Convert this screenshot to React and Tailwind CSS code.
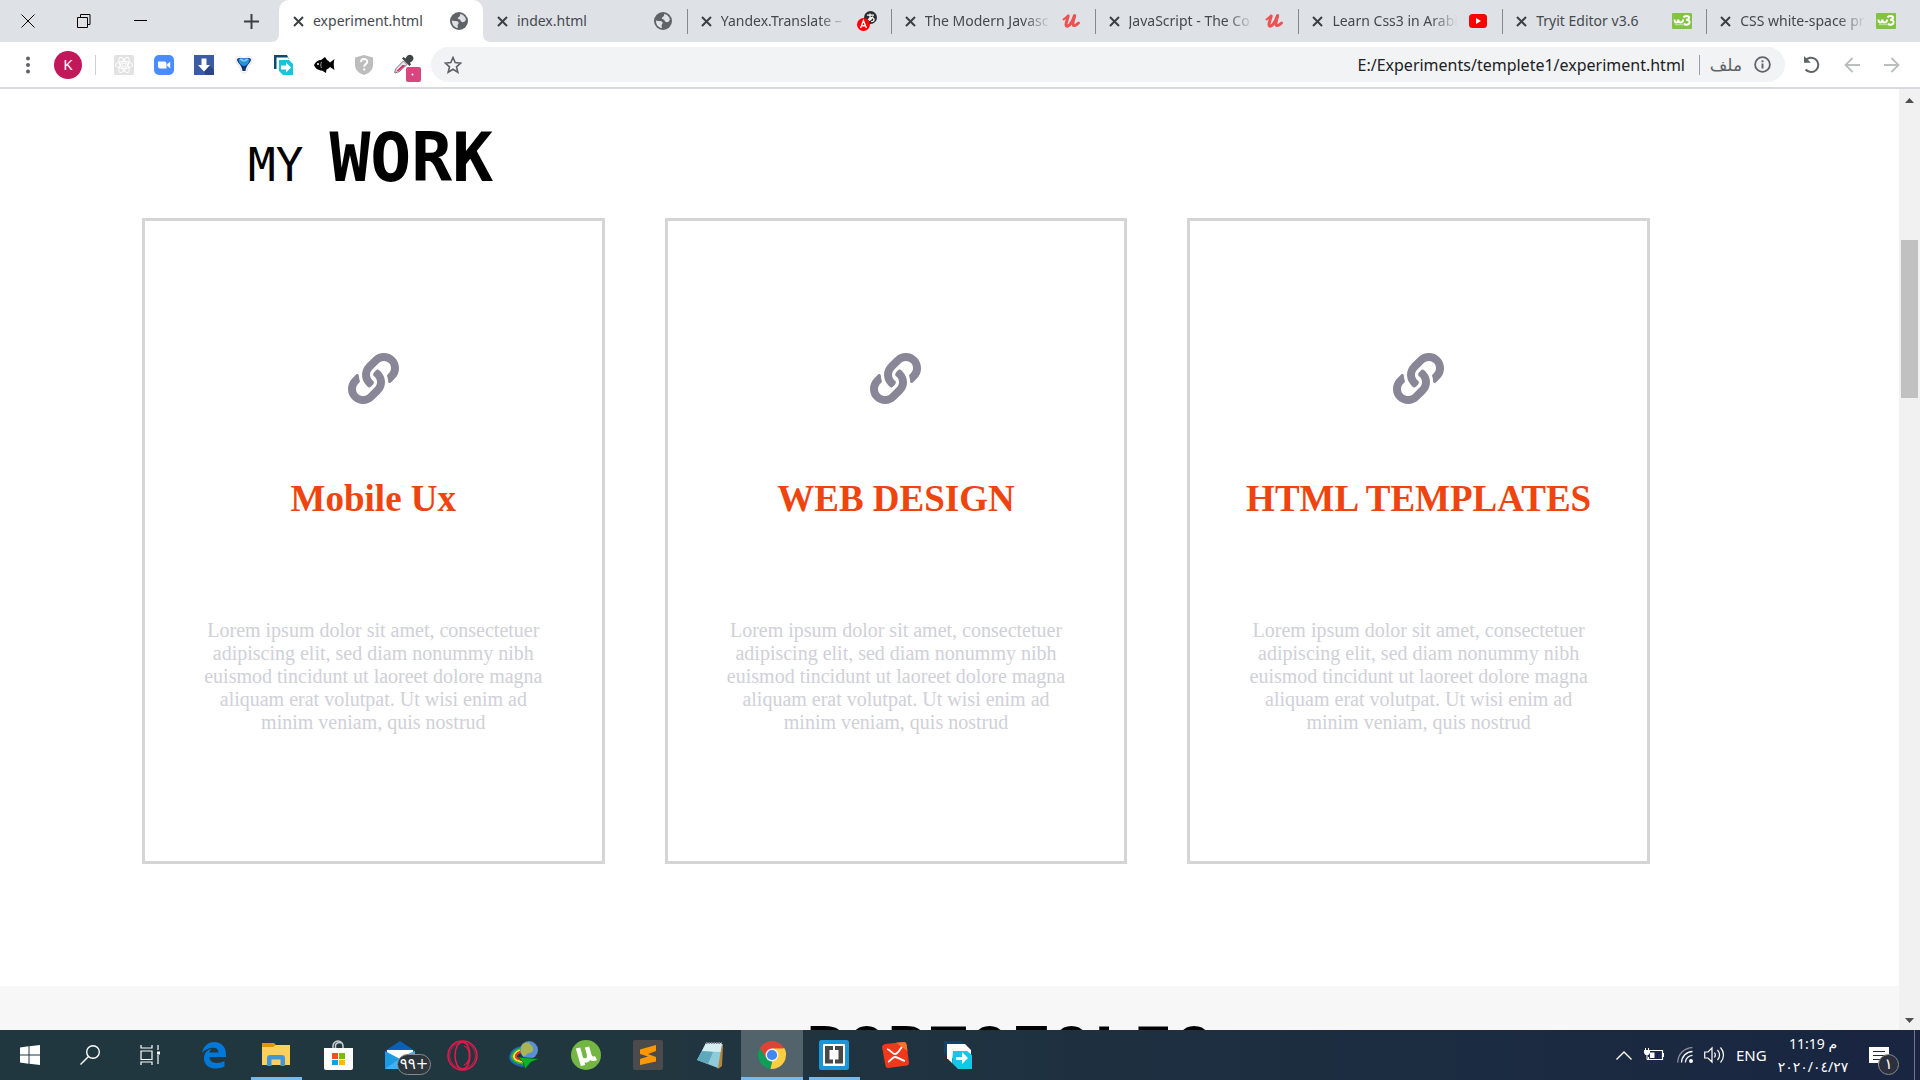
import React from "react";
import { FaLink } from "react-icons/fa";

const UI = "font-['Noto_Sans','DejaVu_Sans',sans-serif]";

/* ---------- tab icons ---------- */
const Globe = () => (
  <svg width="18" height="18" viewBox="0 0 18 18">
    <circle cx="9" cy="9" r="9" fill="#5f6368" />
    <path
      d="M2 8.5 C4 9.5 7 8 8.3 10 C9.4 11.6 7.4 12.2 7.6 14 C7.7 15 8.3 15.6 7.6 16 C4 15.3 1.8 12.3 2 8.5Z M10 2 C13 2.3 15.2 4.4 15.9 7.2 C15.4 9.6 13.3 10.9 11.4 9.8 C10.2 9 10.8 7.6 9.2 7.3 C7.6 7 7.4 6.2 8.4 5.3 C9.2 4.6 10.6 4.2 10 2Z"
      fill="#dee1e6"
    />
  </svg>
);
const Yandex = () => (
  <svg width="20" height="20" viewBox="0 0 20 20">
    <circle cx="13.5" cy="6.5" r="6.5" fill="#2d2d2d" />
    <path d="M10 4.200h7 M13 2.500v7.500 M11 9c1.500-3 6-3 6-.5 0 1.500-1.200 2.200-2.800 2.200 M15.800 5.500c-.8 2-2.300 3.500-4 4" stroke="#fff" strokeWidth="1.200" fill="none" />
    <circle cx="6.500" cy="13.500" r="6.500" fill="#f00" />
    <path d="M3.600 17 6.500 9.700 9.400 17 M4.700 14.800h3.600" stroke="#fff" strokeWidth="1.400" fill="none" />
  </svg>
);
const Udemy = () => (
  <svg width="18" height="14" viewBox="0 0 18 14" fill="none" stroke="#ec5252" strokeLinecap="round" strokeLinejoin="round">
    <path d="M1.500 5.500C3 4.500 4.500 3 6 1.800" strokeWidth="2" />
    <path d="M6.200 2C5.600 5 4 8 4 10.500 4 13 6.200 12.500 8 10.500 9.800 8.500 11.500 5 12.500 1.800" strokeWidth="3" />
    <path d="M12.800 1.800C12 4.500 10.800 8 11 10.500 11.300 12.500 13.500 12 16.500 9" strokeWidth="2.800" />
  </svg>
);
const Youtube = () => (
  <svg width="18" height="14" viewBox="0 0 18 14">
    <rect width="18" height="14" rx="3.500" fill="#f00" />
    <path d="M7 4l5 3-5 3z" fill="#fff" />
  </svg>
);
const W3 = () => (
  <svg width="20" height="16" viewBox="0 0 20 16">
    <rect width="20" height="16" rx="1" fill="#82c341" />
    <path d="M2.500 6.500c0 4 3.500 4 3.700 0 .2 4 4.500 4 5 0M11.500 4.500c1-2 5.500-2 5.500.3 0 1.700-2 2-3 2 2 0 4 .7 3.500 3-.5 2.500-4.500 2.700-5.500.7" fill="none" stroke="#fff" strokeWidth="2" />
    <path d="M3 11.500h8" stroke="#b8dd94" strokeWidth="1.500" />
  </svg>
);

const tabs = [
  { title: "experiment.html", Icon: Globe, active: true },
  { title: "index.html", Icon: Globe },
  { title: "Yandex.Translate –", Icon: Yandex, fade: true, sep: true },
  { title: "The Modern Javasc", Icon: Udemy, fade: true, sep: true },
  { title: "JavaScript - The Co", Icon: Udemy, fade: true, sep: true },
  { title: "Learn Css3 in Arabi", Icon: Youtube, fade: true, sep: true },
  { title: "Tryit Editor v3.6", Icon: W3, sep: true },
  { title: "CSS white-space pr", Icon: W3, fade: true, sep: true },
];

function Tab({ title, Icon, active, fade, sep }) {
  return (
    <div className={"relative flex h-full min-w-0 flex-1 items-center pl-3.5 pr-3 " + (active ? "rounded-t-[10px] bg-white" : "")}>
      {sep && <span className="absolute left-0 top-[9px] h-[25px] w-px bg-[#85888d]" />}
      {active && (
        <>
          <svg className="absolute -left-2 bottom-0" width="8" height="8" viewBox="0 0 8 8"><path d="M8 0v8H0c5 0 8-3 8-8z" fill="#fff" /></svg>
          <svg className="absolute -right-2 bottom-0" width="8" height="8" viewBox="0 0 8 8"><path d="M0 0v8h8C3 8 0 5 0 0z" fill="#fff" /></svg>
        </>
      )}
      <button aria-label={"Close " + title} className="flex w-5 shrink-0 items-center">
        <svg width="11" height="11" viewBox="0 0 11 11"><path d="M1 1l9 9M10 1l-9 9" stroke="#3c4043" strokeWidth="2" /></svg>
      </button>
      <span
        className={
          "min-w-0 flex-1 overflow-hidden whitespace-nowrap text-[14px] leading-5 text-[#45494d] " +
          (fade ? "[mask-image:linear-gradient(to_right,black_78%,transparent)]" : "")
        }
      >
        {title}
      </span>
      <span className="ml-2 flex w-6 shrink-0 items-center justify-center"><Icon /></span>
    </div>
  );
}

/* ---------- extension icons ---------- */
const extensions = [
  ["React tools", <svg width="20" height="20" viewBox="0 0 20 20"><rect width="20" height="20" rx="1.500" fill="#e2e2e2" /><g fill="none" stroke="#fff" strokeWidth="1"><ellipse cx="10" cy="10" rx="8.500" ry="3.500" /><ellipse cx="10" cy="10" rx="8.500" ry="3.500" transform="rotate(60 10 10)" /><ellipse cx="10" cy="10" rx="8.500" ry="3.500" transform="rotate(120 10 10)" /><circle cx="10" cy="10" r="2" /></g></svg>],
  ["Zoom", <svg width="20" height="20" viewBox="0 0 20 20"><rect width="20" height="20" rx="5" fill="#4a8cff" /><path d="M4 6.500h6.500a2 2 0 0 1 2 2v5H6a2 2 0 0 1-2-2zM13.200 9l3-2.300v6.600l-3-2.300z" fill="#fff" /></svg>],
  ["Downloader", <svg width="20" height="20" viewBox="0 0 20 20"><rect width="20" height="20" fill="#3b5ba5" /><path d="M15 10l5 5v5h-8l-2-3z" fill="#2b4687" /><path d="M7.500 3.500h5V10h3.500l-6 6.500L4 10h3.500z" fill="#fff" /></svg>],
  ["Vysor", <svg width="18" height="20" viewBox="0 0 18 20"><path d="M1 5C1 1 6 1 9 4c3-3 8-3 8 1 0 4-4.500 6-5 11-.5 3-5.500 3-6 0C5.500 11 1 9 1 5z" fill="#fff" stroke="#e2e2e2" /><path d="M2 4c2-2 5-1 7 1 2-2 5-3 7-1 0 4-5 6-5.500 12h-3C7 10 2 8 2 4z" fill="#10366e" /><path d="M3.500 4C6 2.500 12 2.500 14.500 4c0 4-2.500 6.500-5.500 7C6 10.500 3.500 8 3.500 4z" fill="#2490ea" /><path d="M4.500 4c2-.8 3 0 4.500 1.500C10.500 4 11.500 3.200 13.500 4 12 6 10.500 6.500 9 6.500S6 6 4.500 4z" fill="#8cc8f8" /></svg>],
  ["Share page", <svg width="20" height="20" viewBox="0 0 20 20"><path d="M0 0h13l2 4H4v10H0z" fill="#0b4a6f" /><path d="M2.500 2.500h12V6H6v9H2.500z" fill="#fff" /><path d="M5 5h10l4 4v11H9l-4-4z" fill="#16c4dc" /><path d="M7 10.500h5V7.500l5 5-5 5v-3H7z" fill="#fff" /></svg>],
  ["Fish", <svg width="21" height="16" viewBox="0 0 21 16"><path d="M0 8C2 4 5 3 7 3l4-3 2 3c1 .5 2 1.500 3 2.500L20.500 2c-1 3-1 8 0 11L16 10c-1 1-2 2-3.500 2.500L12 16l-4-2.500C4 13.500 1 11 0 8z" fill="#000" /><circle cx="4" cy="7" r="1" fill="#fff" /><path d="M7.500 5c-1 2-1 4 0 6" stroke="#999" fill="none" /></svg>],
  ["Site safety", <svg width="18" height="20" viewBox="0 0 18 20"><path d="M9 0l9 2.500V10c0 5-4 8.500-9 10-5-1.500-9-5-9-10V2.500z" fill="#bdbdbd" /><path d="M6 7c0-4 6.300-3.800 6.300-.3C12.300 9 9.200 9 9.200 11.700M9.200 13.500v2" fill="none" stroke="#fff" strokeWidth="2" /></svg>],
  ["Color picker", <svg width="28" height="28" viewBox="0 0 28 28"><path d="M1.500 18.500L3 14.500l7.500-7.500 3.500 3.500-7.500 7-4.500 1.500z" fill="#f3dfe6" stroke="#777" strokeWidth="1" /><path d="M3 17.500l6.500-6.500 3 .3-6.300 5.500z" fill="#d6296b" /><path d="M9 4.500l1.500-1.500 2.200 1.500C13.500 1.500 16.500-.5 19 1.500s1.500 5-1 6.500l-1 .5 1 2-1.500 1.500z" fill="#3f4446" /><rect x="13" y="13" width="15" height="15" rx="2" fill="#d9467f" /><circle cx="19.500" cy="20.500" r="1" fill="#fff" /></svg>],
];

/* ---------- taskbar icons ---------- */
const apps = [
  ["Edge", <svg width="26" height="28" viewBox="0 0 26 28"><path d="M1 12C2.500 4.500 7.500 1 13.300 1 20.500 1 25 6 25 13v3H8.500c0 4 3.500 6 7.500 6 3 0 5.200-.8 7.500-2v5.600c-2.500 1.300-5.300 2-8.500 2C7.500 27.600 3 23.500 3 17.500 3 12.500 6 9.300 10.500 7.600 9 9.200 8.600 10.500 8.500 11.600h8.900c0-3.100-1.700-4.900-5-4.900C8 6.700 3.500 8.700 1 12z" fill="#0078d7" /></svg>],
  ["File Explorer", <svg width="28" height="24" viewBox="0 0 28 24"><path d="M0 0h12l2 2v3H0z" fill="#dd9a00" /><path d="M0 4h11l3-2h14v20H0z" fill="#ffd05c" /><path d="M5 23v-8a3 3 0 0 1 3-3h12a3 3 0 0 1 3 3v8h-4.500v-6.500h-9V23z" fill="#3e97dc" /></svg>, "w-[51px]"],
  ["Store", <svg width="30" height="30" viewBox="0 0 30 30"><path d="M10 9V6a5 5 0 0 1 10 0v3M12.500 8V5a4 4 0 0 1 5.500-2" fill="none" stroke="#c8d0d4" strokeWidth="1.500" /><path d="M1 8h29v20a2 2 0 0 1-2 2H3a2 2 0 0 1-2-2z" fill="#fff" /><path d="M9 13h6v6H9z" fill="#f25022" /><path d="M16 13h6v6h-6z" fill="#7fba00" /><path d="M9 20h6v5H9z" fill="#00a4ef" /><path d="M16 20h6v5h-6z" fill="#ffb900" /></svg>],
  ["Mail", <svg width="30" height="28" viewBox="0 0 30 28"><path d="M0 10L15 0l15 10z" fill="#0a62b8" /><path d="M2 9h26v10H2z" fill="#fff" /><path d="M0 10l15 8 15-8v18H0z" fill="#1c9be2" /><path d="M0 28l18-13 12-5v18z" fill="#3db4ef" /></svg>],
  ["Opera", <svg width="31" height="31" viewBox="0 0 31 31" fill="none" stroke="#e5194b"><circle cx="15.500" cy="15.500" r="14.500" strokeWidth="1.500" /><circle cx="15.500" cy="15.500" r="13" strokeWidth="0.800" /><ellipse cx="15.500" cy="15.500" rx="7.500" ry="13.500" strokeWidth="1.500" /><path d="M17 6c7 2 7 17 0 19" strokeWidth="1.300" /></svg>],
  ["Download Manager", <svg width="31" height="29" viewBox="0 0 31 29" fill="none"><path d="M15 25C7 25 0 20 1.500 14.500 2.500 10 7 7 13 6" stroke="#2a62c8" strokeWidth="2" /><path d="M16 23C8 23 2 19 3 14.500 4 11 8 8 13 7.500" stroke="#20b83b" strokeWidth="2" /><path d="M16 21C9 21 4 18 5 14.500 6 12 9 9.500 13 9" stroke="#ffe22d" strokeWidth="2" /><path d="M16 19C10 19 6 17 7 14.500 8 12.500 10 11 13 10.500" stroke="#e33" strokeWidth="1.800" /><circle cx="20" cy="9" r="9" fill="#5a8fd0" /><path d="M13 4c3-3 7-3 8-1s4 2 3 6-5 2-7 5-5 0-5-4 0-4 1-6z" fill="#a9b452" /><path d="M9 16l21 2-8 3-6 7-2-7z" fill="#0bb32a" stroke="#055c13" strokeWidth=".7" /></svg>],
  ["uTorrent", <svg width="30" height="30" viewBox="0 0 30 30"><circle cx="15" cy="15" r="15" fill="#74b643" /><path d="M7 8l5 17.500M11 20c6 2 8-2 7-6L16 7M18 14c1 4 3 6 7 4" fill="none" stroke="#fff" strokeWidth="4.500" /></svg>],
  ["Sublime Text", <svg width="30" height="30" viewBox="0 0 30 30"><rect width="30" height="30" rx="2" fill="#4b4b4b" /><path d="M23 5v6l-8 3 8 3v4.500L7 25v-6l8-2.500L7 14V9.500z" fill="#ff9800" /></svg>],
  ["Notepad", <svg width="28" height="28" viewBox="0 0 28 28"><path d="M11 2l16 1-1 22-4 3z" fill="#b8863b" /><path d="M10 2h16l-4 25L1 19z" fill="#8fcbd8" /><path d="M10 2h16l-1.500 9L6 10z" fill="#d6eef2" /><path d="M6 10l-5 9 11 4 5-12z" fill="#5fa9bc" /><path d="M10 2h16" stroke="#7a8489" strokeWidth="2" strokeDasharray="1.500 1" /></svg>],
  ["Chrome", <svg width="28" height="28" viewBox="0 0 28 28"><path d="M14 14L1.900 7A14 14 0 0 1 26.100 7z" fill="#db4437" /><path d="M14 14L26.100 7A14 14 0 0 1 14 28z" fill="#ffcd40" /><path d="M14 14v14A14 14 0 0 1 1.900 7z" fill="#0f9d58" /><path d="M14 7.500h12.400c1 2.200 1.600 4 1.600 6.500L20 17z" fill="#ffcd40" /><path d="M8.300 17.200L1.900 7h12.600z" fill="#db4437" /><path d="M8.300 17l6 3.500L14 28h-1L7 18z" fill="#0f9d58" /><path d="M14.300 20.500L19.700 17 14 28h-1.500z" fill="#ffcd40" /><circle cx="14" cy="14" r="6.500" fill="#f1f1f1" /><circle cx="14" cy="14" r="5.100" fill="#4285f4" /></svg>, "w-full", true],
  ["Brackets", <svg width="30" height="30" viewBox="0 0 30 30"><rect width="30" height="30" rx="2.500" fill="#1c94d8" /><rect x="4" y="4" width="22" height="22" rx="1" fill="#fff" /><path d="M6 6h8v4h-3.500v9.500H14v4H6zM24 6h-8v4h3.500v9.500H16v4h8z" fill="#484848" /></svg>, "w-[51px]"],
  ["XMind", <svg width="28" height="28" viewBox="0 0 28 28"><path d="M3 3L22 1q2 0 2.500 2L27 22q0 2-2 2.500L6 27q-2 0-2.500-2L0 6Q0 4 3 3z" fill="#f0381b" /><path d="M14 1.800L22 1q2 0 2.500 2l1 7z" fill="#f9722b" /><path d="M5 8c4 1 5 5 8 5s4-4 7-7M6 21c3-1 4-5 7-5s6 3 10 4" fill="none" stroke="#fff" strokeWidth="1.800" /></svg>],
  ["Share", <svg width="28" height="28" viewBox="0 0 28 28"><path d="M0 0h17l3 3H5v14l-5-5z" fill="#0b4568" /><path d="M3 3h18l6 6v8H10L3 18z" fill="#fff" /><path d="M9 10h14l5 4v14H14l-6-6z" fill="#12c8e6" /><path d="M3 3h16l7 7H8v12l-5-5z" fill="#fff" /><path d="M12 16h6v-5l6 6-6 6v-4h-6z" fill="#fff" /></svg>],
];

const lorem =
  "Lorem ipsum dolor sit amet, consectetuer adipiscing elit, sed diam nonummy nibh euismod tincidunt ut laoreet dolore magna aliquam erat volutpat. Ut wisi enim ad minim veniam, quis nostrud";

function TabStrip() {
  return (
    <div className="flex h-[42px] shrink-0 bg-[#dee1e6] pr-2.5">
      <div className="flex w-[279px] shrink-0 items-center">
        <button aria-label="Close window" className="flex h-9 w-14 items-center justify-center">
          <svg width="14" height="14" viewBox="0 0 14 14"><path d="M.5.500l13 13M13.500.500l-13 13" stroke="#000" /></svg>
        </button>
        <button aria-label="Restore window" className="flex h-9 w-14 items-center justify-center">
          <svg width="14" height="14" viewBox="0 0 14 14" fill="none" stroke="#000"><path d="M.5 3.500h10v10H.5zM3.500 3V.5h9.500v10h-2" /></svg>
        </button>
        <button aria-label="Minimize window" className="flex h-9 w-14 items-center justify-center">
          <svg width="13" height="3" viewBox="0 0 13 3"><path d="M0 .5h13" stroke="#000" /></svg>
        </button>
        <button aria-label="New tab" className="ml-auto mr-5 flex items-center justify-center">
          <svg width="15" height="15" viewBox="0 0 15 15"><path d="M7.500 0v15M0 7.500h15" stroke="#3c4043" strokeWidth="2" /></svg>
        </button>
      </div>
      <nav aria-label="Tabs" className="flex min-w-0 flex-1">
        {tabs.map((t) => <Tab key={t.title} {...t} />)}
      </nav>
    </div>
  );
}

function Toolbar() {
  return (
    <div className="flex h-[47px] shrink-0 items-center border-b-2 border-[#d8d9df] bg-white">
      <button aria-label="Menu" className="ml-3 flex w-[31px] justify-center">
        <svg width="4" height="18" viewBox="0 0 4 18" fill="#5f6368"><circle cx="2" cy="2.500" r="2" /><circle cx="2" cy="9" r="2" /><circle cx="2" cy="15.500" r="2" /></svg>
      </button>
      <button aria-label="Profile" className="ml-[11px] flex size-[28px] items-center justify-center rounded-full bg-[#c2185b] text-[15px] leading-none text-white">K</button>
      <span className="ml-[13px] mr-2 h-5 w-px bg-[#cfd1d5]" />
      {extensions.map(([name, icon]) => (
        <button key={name} aria-label={name} className={"flex w-10 shrink-0 items-center justify-center " + (name === "Color picker" ? "pl-[6px] pt-[7px]" : "")}>{icon}</button>
      ))}
      <div className="ml-[7px] flex h-[35px] min-w-0 flex-1 items-center rounded-full bg-[#f1f3f4] pl-[13px] pr-[14px]">
        <button aria-label="Bookmark">
          <svg width="18" height="18" viewBox="0 0 18 18"><path d="M9 1.500l2.200 5.100 5.500.5-4.200 3.700 1.300 5.400L9 13.300l-4.800 2.900 1.300-5.400L1.300 7.100l5.500-.5z" fill="none" stroke="#5f6368" strokeWidth="1.600" /></svg>
        </button>
        <input aria-label="Address" className="h-full min-w-0 flex-1 bg-transparent text-right text-[16px] text-[#202124] outline-none" defaultValue="E:/Experiments/templete1/experiment.html" />
        <span className="ml-3.5 mr-2.5 h-5 w-px bg-[#9aa0a6]" />
        <span dir="rtl" className="w-8 text-center font-['DejaVu_Sans',sans-serif] text-[17px] leading-5 text-[#5f6368]">ملف</span>
        <button aria-label="Page information" className="ml-3">
          <svg width="17" height="17" viewBox="0 0 17 17"><circle cx="8.500" cy="8.500" r="7.400" fill="none" stroke="#5f6368" strokeWidth="1.800" /><path d="M8.500 7.500v5M8.500 4.300v2" stroke="#5f6368" strokeWidth="1.900" /></svg>
        </button>
      </div>
      <div className="mr-2 flex w-[127px] shrink-0 pl-[7px]">
        <button aria-label="Reload" className="flex w-10 items-center justify-center">
          <svg width="18" height="18" viewBox="0 0 18 18"><path d="M2 5A7.200 7.200 0 1 1 2.600 13.500" fill="none" stroke="#5f6368" strokeWidth="2" /><path d="M1 0v6.800h6.800z" fill="#5f6368" /></svg>
        </button>
        <button aria-label="Back" className="flex w-10 items-center justify-center">
          <svg width="16" height="16" viewBox="0 0 16 16"><path d="M16 8H1.500M8.500 1l-7 7 7 7" fill="none" stroke="#babcbe" strokeWidth="1.800" /></svg>
        </button>
        <button aria-label="Forward" className="flex w-10 items-center justify-center">
          <svg width="16" height="16" viewBox="0 0 16 16"><path d="M0 8h14.500M7.500 1l7 7-7 7" fill="none" stroke="#babcbe" strokeWidth="1.800" /></svg>
        </button>
      </div>
    </div>
  );
}

function Card({ title }) {
  return (
    <article className="flex flex-col items-center border-[3px] border-[#d5d5d5] px-[54px] pb-[127px] pt-[132px] text-center">
      <FaLink size={51} color="#888697" />
      <h3 className="mt-[72px] whitespace-nowrap text-[37px] font-bold leading-[46px] text-[#f0440f]">{title}</h3>
      <p className="mt-[97px] text-[20px] leading-[23px] text-[#d0d0d8]">{lorem}</p>
    </article>
  );
}

function Page() {
  return (
    <main className="min-w-0 flex-1 overflow-hidden bg-white font-['Liberation_Serif',serif]">
      <section className="pb-[122px] pl-[142px] pr-[249px] pt-[29px]">
        <h2 className="ml-[106px] font-['DejaVu_Sans_Mono',monospace] text-[46px] leading-[80px] text-black">
          MY<strong className="ml-[26px] text-[68px] font-bold">WORK</strong>
        </h2>
        <div className="mt-[13px] grid grid-cols-3 gap-[60px]">
          <Card title="Mobile Ux" />
          <Card title="WEB DESIGN" />
          <Card title="HTML TEMPLATES" />
        </div>
      </section>
      <section className="bg-[#f7f7f7] pt-[27px]">
        <h2 className="pl-[121px] text-center font-['DejaVu_Sans_Mono',monospace] text-[68px] font-bold leading-[80px] text-black">PORTOFOLIO</h2>
      </section>
    </main>
  );
}

function Scrollbar() {
  return (
    <div aria-hidden="true" className="flex w-[21px] shrink-0 flex-col items-center bg-[#f1f1f1] pb-[7px] pt-[9px]">
      <svg width="9" height="5" viewBox="0 0 9 5"><path d="M4.500 0L9 5H0z" fill="#505050" /></svg>
      <div className="mt-[137px] h-[158px] w-[17px] bg-[#c1c1c1]" />
      <svg className="mt-auto" width="9" height="5" viewBox="0 0 9 5"><path d="M4.500 5L9 0H0z" fill="#505050" /></svg>
    </div>
  );
}

function Taskbar() {
  return (
    <footer className="flex h-[50px] shrink-0 bg-linear-to-r from-[#21373f] from-30% to-[#192541] text-white">
      <button aria-label="Start" className="flex w-[60px] items-center justify-center">
        <svg width="20" height="20" viewBox="0 0 20 20" fill="#fff"><path d="M0 2.500L8.500 1.300V9.500H0zM9.500 1.200L20 0v9.500H9.500zM0 10.500h8.500v8.200L0 17.500zM9.500 10.500H20V20L9.500 18.800z" /></svg>
      </button>
      <button aria-label="Search" className="flex w-[60px] items-center justify-center">
        <svg width="20" height="20" viewBox="0 0 20 20" fill="none" stroke="#fff" strokeWidth="1.400"><circle cx="13" cy="7" r="6.300" /><path d="M8.500 11.500L.5 19.500" /></svg>
      </button>
      <button aria-label="Task view" className="mr-[3px] flex w-[60px] items-center justify-center">
        <svg width="20" height="20" viewBox="0 0 20 20" fill="none" stroke="#fff" strokeWidth="1.200"><path d="M1 0v3h11V0M1 20v-3h11v3M1 6h11v8.500H1zM18 0v5M18 10v9" /><path d="M17 6.500h3v3h-3z" fill="#fff" stroke="none" /></svg>
      </button>
      {apps.map(([name, icon, bar, active]) => (
        <button key={name} aria-label={name} className={"relative flex w-[62px] shrink-0 items-center justify-center " + (active ? "bg-[#52636c]" : "")}>
          {icon}
          {bar && <span className={"absolute bottom-0 h-[3px] bg-[#76b9ed] " + bar} />}
          {name === "Mail" && (
            <span dir="ltr" className="absolute left-[28px] top-[24px] flex h-[21px] w-[34px] items-center justify-center rounded-full border border-[#858b8f] bg-[#2d363b] font-['DejaVu_Sans',sans-serif] text-[15px] leading-none">٩٩+</span>
          )}
        </button>
      ))}
      <div className="ml-auto flex items-center">
        <button aria-label="Hidden icons" className="flex w-[30px] justify-center">
          <svg width="16" height="9" viewBox="0 0 16 9"><path d="M.5 8.500L8 1l7.500 7.500" fill="none" stroke="#fff" strokeWidth="1.400" /></svg>
        </button>
        <button aria-label="Battery" className="flex w-[30px] justify-center">
          <svg width="20" height="14" viewBox="0 0 20 14"><path d="M6 2.500h12.500v9H4.500V9M19.500 5v4" fill="none" stroke="#fff" strokeWidth="1.200" /><path d="M6 4.500h4.500V10H6z M0 2h6v3L4.500 7h-3L0 5z" fill="#fff" /><path d="M1.500 0v2M4.500 0v2M3 7v4.500h3" stroke="#fff" fill="none" /></svg>
        </button>
        <button aria-label="Network" className="flex w-[32px] justify-center">
          <svg width="16" height="16" viewBox="0 0 16 16" fill="none" stroke="#fff" strokeWidth="1.300"><path d="M.7 15.500C1 7 7 1 15.500.7" opacity=".5" /><path d="M4.500 15.500C4.700 9.500 9.500 4.700 15.500 4.500M8.300 15.500c.2-4 3.200-7 7.200-7.200" /><circle cx="14" cy="14" r="1.300" fill="#fff" /></svg>
        </button>
        <button aria-label="Volume" className="flex w-[26px] justify-center">
          <svg width="21" height="18" viewBox="0 0 21 18" fill="none" stroke="#fff" strokeWidth="1.200"><path d="M.7 6H4l4-4v14l-4-4H.7zM10.500 6.500c1 1.500 1 3.500 0 5M13.500 4c2.500 3 2.500 7 0 10M16.500 1.500c4 4.500 4 10.500 0 15" /></svg>
        </button>
        <button aria-label="Language" className="ml-[9px] w-[30px] text-[15px] leading-5">ENG</button>
        <button aria-label="Date and time" dir="ltr" className="ml-[12px] flex w-[70px] flex-col items-center text-[14px] leading-[23px]">
          <span>11:19 م</span>
          <span>٢٠٢٠/٠٤/٢٧</span>
        </button>
        <button aria-label="Notifications" className="relative ml-[21px] mr-[25px] h-[50px] w-5">
          <svg className="mt-[3px]" width="20" height="20" viewBox="0 0 20 20"><path d="M0 0h20v16h-8l-3 3v-3H0z" fill="#fff" /><path d="M4 4.500h12M4 8.500h12M4 12.500h8" stroke="#1a2741" strokeWidth="1.200" /></svg>
          <span className="absolute left-[9px] top-[24px] flex size-[21px] items-center justify-center rounded-full border border-[#858b8f] bg-[#2b303c] font-['DejaVu_Sans',sans-serif] text-[15px] leading-none">١</span>
        </button>
        <span className="mr-[5px] h-[50px] w-px bg-[#70788a]" />
      </div>
    </footer>
  );
}

export default function App() {
  return (
    <div className={"flex h-screen flex-col overflow-hidden " + UI}>
      <TabStrip />
      <Toolbar />
      <div className="flex min-h-0 flex-1">
        <Page />
        <Scrollbar />
      </div>
      <Taskbar />
    </div>
  );
}
